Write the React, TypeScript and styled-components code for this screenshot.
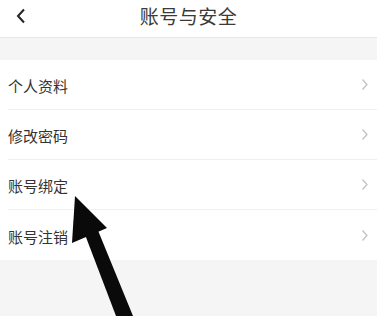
import React from "react";
import styled, { createGlobalStyle } from "styled-components";

const GlobalStyle = createGlobalStyle`
  html, body {
    margin: 0;
    padding: 0;
    background: #f5f5f5;
    font-family: "Noto Sans CJK SC", "Noto Sans", sans-serif;
  }
`;

const Page = styled.div`
  position: relative;
  width: 377px;
  height: 316px;
  overflow: hidden;
  background: #f5f5f5;
`;

const Header = styled.header`
  position: relative;
  height: 37px;
  display: flex;
  align-items: center;
  justify-content: center;
  background: #ffffff;
  border-bottom: 1px solid #e6e6e6;
`;

const BackButton = styled.div`
  position: absolute;
  left: 15px;
  top: 8px;
  width: 12px;
  height: 16px;
  display: flex;
`;

const Title = styled.h1`
  margin: 0;
  margin-top: -7px;
  font-size: 19px;
  font-weight: 400;
  color: #3a3a3a;
  letter-spacing: 0.5px;
`;

const Gap = styled.div`
  height: 22px;
`;

const List = styled.ul`
  margin: 0;
  padding: 0;
  list-style: none;
  background: #ffffff;
`;

const Row = styled.li<{ $last?: boolean }>`
  height: 50px;
  margin-left: 8px;
  padding-right: 8px;
  display: flex;
  align-items: center;
  justify-content: space-between;
  border-bottom: ${(p) => (p.$last ? "none" : "1px solid #f0f0f0")};
  box-sizing: border-box;
`;

const Label = styled.span`
  font-size: 15px;
  color: #333333;
  margin-top: 2px;
`;

const Arrow = styled.svg`
  position: absolute;
  left: 0;
  top: 0;
  pointer-events: none;
`;

const items = ["个人资料", "修改密码", "账号绑定", "账号注销"];

const Chevron = () => (
  <svg width="8" height="13" viewBox="0 0 8 13">
    <path d="M1.5 1.5 L6 6.5 L1.5 11.5" fill="none" stroke="#c2c2c2" strokeWidth="1.3" />
  </svg>
);

export default function App() {
  return (
    <>
      <GlobalStyle />
      <Page>
        <Header>
          <BackButton>
            <svg width="12" height="16" viewBox="0 0 12 16">
              <path d="M9 1.5 L3 8 L9 14.5" fill="none" stroke="#222" strokeWidth="2" />
            </svg>
          </BackButton>
          <Title>账号与安全</Title>
        </Header>
        <Gap />
        <List>
          {items.map((t, i) => (
            <Row key={t} $last={i === items.length - 1}>
              <Label>{t}</Label>
              <Chevron />
            </Row>
          ))}
        </List>
        <Arrow width="377" height="316" viewBox="0 0 377 316">
          <polygon points="75,196 72,243 107,228" fill="#0a0a0a" />
          <polygon points="84,232 97,228 133,316 116,316" fill="#0a0a0a" />
        </Arrow>
      </Page>
    </>
  );
}
